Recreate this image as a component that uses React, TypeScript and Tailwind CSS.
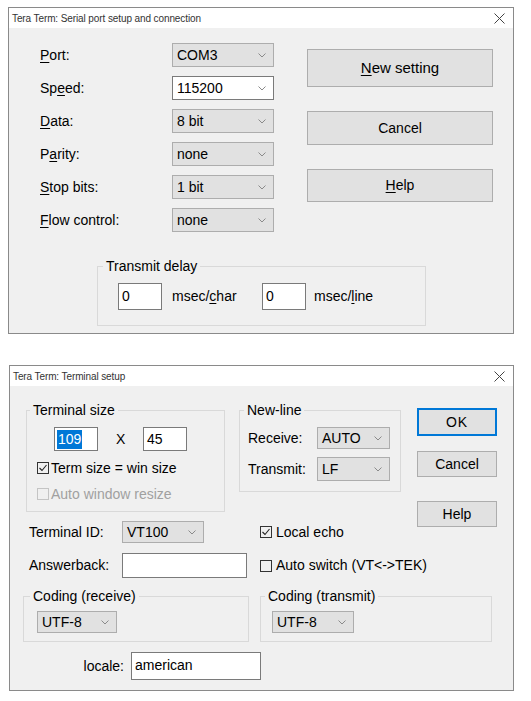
import React from 'react';

const Chevron = () => (
  <svg width="8" height="5" viewBox="0 0 8 5" className="shrink-0">
    <path d="M0.5 0.5 L4 4 L7.5 0.5" fill="none" stroke="#8a8a8a" strokeWidth="1" />
  </svg>
);

const CloseX = () => (
  <svg width="11" height="11" viewBox="0 0 11 11">
    <path d="M0.5 0.5 L10.5 10.5 M10.5 0.5 L0.5 10.5" stroke="#444" strokeWidth="1" />
  </svg>
);

function Checkbox({ checked, disabled }: { checked?: boolean; disabled?: boolean }) {
  return (
    <svg width="12" height="12" viewBox="0 0 12 12" className="shrink-0">
      <rect x="0.5" y="0.5" width="11" height="11" fill="none" stroke={disabled ? '#c4c4c4' : '#333'} />
      {checked && <path d="M2.5 6 L5 8.5 L9.5 3" fill="none" stroke="#222" strokeWidth="1.1" />}
    </svg>
  );
}

function Select({ value, white, className }: { value: string; white?: boolean; className: string }) {
  return (
    <div
      className={`flex shrink-0 items-center justify-between pl-[4px] pr-[7px] border ${
        white ? 'bg-white border-[#7a7a7a]' : 'bg-[#e1e1e1] border-[#adadad]'
      } ${className}`}
    >
      <span>{value}</span>
      <Chevron />
    </div>
  );
}

function TitleBar({ title }: { title: string }) {
  return (
    <div className="h-[20px] bg-white flex items-center justify-between pl-[3px] pr-[8px] shrink-0">
      <span className="text-[10px] text-[#333] tracking-[-0.1px]">{title}</span>
      <CloseX />
    </div>
  );
}

const U = ({ children }: { children: React.ReactNode }) => <span className="underline underline-offset-2">{children}</span>;

const portRows = [
  { label: <><U>P</U>ort:</>, value: 'COM3' },
  { label: <>Sp<U>e</U>ed:</>, value: '115200', white: true },
  { label: <><U>D</U>ata:</>, value: '8 bit' },
  { label: <>P<U>a</U>rity:</>, value: 'none' },
  { label: <><U>S</U>top bits:</>, value: '1 bit' },
  { label: <><U>F</U>low control:</>, value: 'none' },
];

function SerialDialog() {
  return (
    <div className="ml-[8px] mt-[7px] w-[506px] border border-[#8a8a8a] bg-[#f0f0f0] flex flex-col">
      <TitleBar title="Tera Term: Serial port setup and connection" />
      <div className="flex pl-[31px] pt-[15px]">
        <div className="flex flex-col gap-[9px]">
          {portRows.map((r, i) => (
            <div key={i} className="flex items-center h-[24px]">
              <span className="w-[132px] shrink-0">{r.label}</span>
              <Select value={r.value} white={r.white} className="w-[102px] h-[24px]" />
            </div>
          ))}
        </div>
        <div className="ml-[33px] w-[186px] flex flex-col pt-[6px]">
          <button className="h-[38px] bg-[#e1e1e1] border border-[#adadad] text-[15px]">
            <U>N</U>ew setting
          </button>
          <button className="mt-[24px] h-[34px] bg-[#e1e1e1] border border-[#adadad]">Cancel</button>
          <button className="mt-[24px] h-[33px] bg-[#e1e1e1] border border-[#adadad]">
            <U>H</U>elp
          </button>
        </div>
      </div>
      <fieldset className="ml-[88px] mt-[26px] w-[329px] border border-[#d9d9d9] pb-[15px]">
        <legend className="ml-[5px] px-[3px] leading-[16px]">Transmit delay</legend>
        <div className="flex items-center mt-[9px] pl-[20px]">
          <div className="w-[44px] h-[27px] shrink-0 bg-white border border-[#7a7a7a] pl-[3px] pt-[2px]">0</div>
          <span className="ml-[10px] w-[90px] shrink-0">msec/<U>c</U>har</span>
          <div className="w-[44px] h-[27px] shrink-0 bg-white border border-[#7a7a7a] pl-[3px] pt-[2px]">0</div>
          <span className="ml-[8px]">msec/<U>l</U>ine</span>
        </div>
      </fieldset>
      <div className="h-[7px]" />
    </div>
  );
}

function TerminalDialog() {
  return (
    <div className="ml-[9px] mt-[31px] w-[505px] border border-[#8a8a8a] bg-[#f0f0f0] flex flex-col">
      <TitleBar title="Tera Term: Terminal setup" />
      <div className="flex flex-col pl-[13px] pt-[16px] pb-[10px]">
        <div className="flex ml-[3px]">
          <div className="w-[375px] shrink-0 flex flex-col whitespace-nowrap">
            <div className="flex items-start">
              <fieldset className="w-[199px] shrink-0 border border-[#d9d9d9] pb-[8px]">
                <legend className="ml-[3px] px-[3px] leading-[16px]">Terminal size</legend>
                <div className="flex items-center mt-[9px] pl-[27px] h-[24px]">
                  <div className="w-[44px] h-[24px] shrink-0 bg-white border border-[#7a7a7a] pl-[2px] flex items-center">
                    <span className="bg-[#0078d7] text-white leading-[19px] px-[1px]">109</span>
                  </div>
                  <span className="ml-[18px] w-[27px] shrink-0">X</span>
                  <div className="w-[44px] h-[24px] shrink-0 bg-white border border-[#7a7a7a] pl-[3px] flex items-center">45</div>
                </div>
                <div className="flex items-center gap-[2px] mt-[8px] h-[18px] pl-[10px]">
                  <Checkbox checked />
                  <span>Term size = win size</span>
                </div>
                <div className="flex items-center gap-[2px] mt-[8px] h-[18px] pl-[10px] text-[#a0a0a0]">
                  <Checkbox disabled />
                  <span>Auto window resize</span>
                </div>
              </fieldset>
              <fieldset className="ml-[14px] w-[162px] shrink-0 border border-[#d9d9d9] pb-[10px]">
                <legend className="ml-[4px] px-[3px] leading-[16px]">New-line</legend>
                <div className="flex items-center mt-[9px] h-[22px] pl-[8px]">
                  <span className="w-[69px] shrink-0">Receive:</span>
                  <Select value="AUTO" className="w-[73px] h-[22px]" />
                </div>
                <div className="flex items-center mt-[8px] h-[24px] pl-[8px]">
                  <span className="w-[69px] shrink-0">Transmit:</span>
                  <Select value="LF" className="w-[73px] h-[24px]" />
                </div>
              </fieldset>
            </div>
            <div className="flex items-center mt-[9px] h-[22px] pl-[3px]">
              <span className="w-[93px] shrink-0">Terminal ID:</span>
              <Select value="VT100" className="w-[82px] h-[22px]" />
              <div className="ml-[56px] shrink-0 flex items-center gap-[4px]">
                <Checkbox checked />
                <span>Local echo</span>
              </div>
            </div>
            <div className="flex items-center mt-[10px] h-[25px] pl-[3px]">
              <span className="w-[93px] shrink-0">Answerback:</span>
              <div className="w-[125px] h-[25px] shrink-0 bg-white border border-[#7a7a7a]" />
              <div className="ml-[13px] shrink-0 flex items-center gap-[4px]">
                <Checkbox />
                <span>Auto switch (VT&lt;-&gt;TEK)</span>
              </div>
            </div>
          </div>
          <div className="ml-[16px] w-[80px] shrink-0 flex flex-col pt-[6px]">
            <button className="h-[28px] bg-[#e1e1e1] border-2 border-[#0078d7] tracking-[1px]">OK</button>
            <button className="mt-[15px] h-[26px] bg-[#e1e1e1] border border-[#adadad]">Cancel</button>
            <button className="mt-[24px] h-[26px] bg-[#e1e1e1] border border-[#adadad]">Help</button>
          </div>
        </div>
        <div className="flex items-start mt-[10px]">
          <fieldset className="w-[226px] shrink-0 border border-[#d9d9d9] pb-[8px]">
            <legend className="ml-[6px] px-[3px] leading-[16px]">Coding (receive)</legend>
            <Select value="UTF-8" className="ml-[13px] mt-[7px] w-[80px] h-[22px]" />
          </fieldset>
          <fieldset className="ml-[11px] w-[232px] shrink-0 border border-[#d9d9d9] pb-[8px]">
            <legend className="ml-[4px] px-[3px] leading-[16px]">Coding (transmit)</legend>
            <Select value="UTF-8" className="ml-[11px] mt-[7px] w-[82px] h-[22px]" />
          </fieldset>
        </div>
        <div className="flex items-center mt-[10px] h-[28px]">
          <span className="w-[101px] shrink-0 text-right">locale:</span>
          <div className="ml-[7px] w-[130px] h-[28px] shrink-0 bg-white border border-[#7a7a7a] pl-[3px] pt-[2px]">american</div>
        </div>
      </div>
    </div>
  );
}

export default function App() {
  return (
    <div className="w-[531px] h-[701px] bg-white text-[14px] text-black font-['Liberation_Sans',Arial,sans-serif] overflow-hidden">
      <SerialDialog />
      <TerminalDialog />
    </div>
  );
}
